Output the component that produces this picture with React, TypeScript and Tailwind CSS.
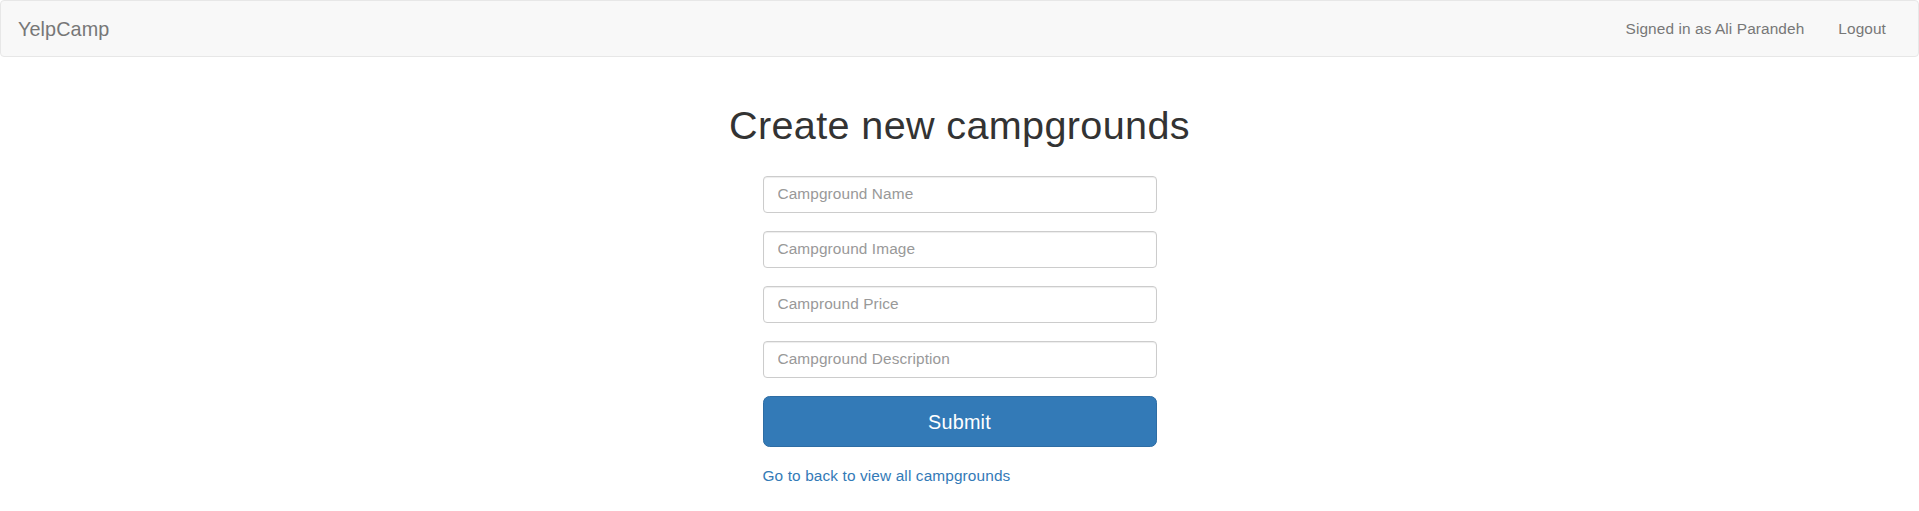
const fields = [
  "Campground Name",
  "Campground Image",
  "Campround Price",
  "Campground Description",
];

export default function App() {
  return (
    <div className="min-h-[511px] bg-white font-['Liberation_Sans',Arial,sans-serif] text-[#333]">
      <nav className="flex h-[57px] items-center justify-between rounded-[4px] border border-[#e7e7e7] bg-[#f8f8f8] pl-[17px] pr-[32px]">
        <a href="#" className="text-[19.8px] leading-[22px] tracking-[0.1px] text-[#777]">
          YelpCamp
        </a>
        <div className="flex items-center gap-[34px] text-[15.4px] leading-[22px] tracking-[0.1px] text-[#777]">
          <a href="#">Signed in as Ali Parandeh</a>
          <a href="#">Logout</a>
        </div>
      </nav>

      <div className="flex flex-col items-center">
        <h1 className="mt-[47px] text-[39.6px] font-normal leading-[1.1] tracking-[0.35px] text-[#333]">
          Create new campgrounds
        </h1>

        <form className="mt-[28px] flex w-[394px] flex-col gap-[18px]">
          {fields.map((f) => (
            <input
              key={f}
              type="text"
              placeholder={f}
              className="h-[37px] w-full rounded-[4px] border border-[#ccc] bg-white px-[14px] text-[15.4px] tracking-[0.1px] text-[#555] shadow-[inset_0_1px_1px_rgba(0,0,0,0.075)] outline-none placeholder:text-[#999]"
            />
          ))}
          <button
            type="button"
            className="h-[51px] w-full rounded-[6.6px] border border-[#2e6da4] bg-[#337ab7] pt-[4px] text-[19.8px] tracking-[0.2px] text-white"
          >
            Submit
          </button>
        </form>

        <div className="mt-[18px] w-[394px] text-[15.4px] leading-[22px] tracking-[0.12px]">
          <a href="#" className="text-[#337ab7]">
            Go to back to view all campgrounds
          </a>
        </div>
      </div>
    </div>
  );
}
